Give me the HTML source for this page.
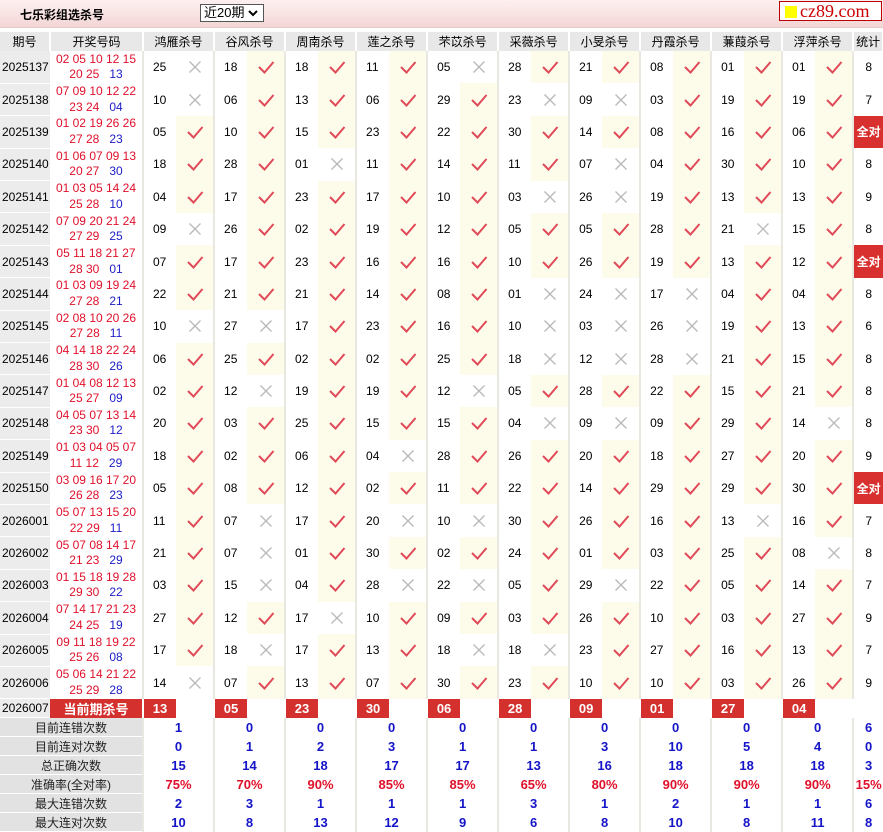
<!DOCTYPE html>
<html><head><meta charset="utf-8"><style>
*{margin:0;padding:0;box-sizing:border-box}
body{width:883px;height:832px;overflow:hidden;background:#fff;font-family:"Liberation Sans","Noto Sans CJK SC",sans-serif;font-size:12px;color:#000;position:relative}
.top{position:absolute;left:0;top:0;width:883px;height:28px;background:linear-gradient(#fdf0f0,#f4d6d6);border-bottom:1px solid #e8c8c8}
.title{position:absolute;left:20px;top:6px;font-weight:bold;font-size:12px}
.sel{position:absolute;left:200px;top:4px;width:64px;height:18px;border:1px solid #555;background:#fff;font-size:13px;line-height:16px;padding-left:3px}
.sel svg{position:absolute;right:5px;top:5px}
.logo{position:absolute;left:779px;top:1px;width:103px;height:20px;border:1px solid #b00;background:#fff;color:#c00;font-family:"Liberation Serif",serif;font-size:18px;line-height:18px;padding-left:20px}
.logo i{position:absolute;left:5px;top:4px;width:12px;height:12px;background:#ff0}
table{position:absolute;left:0;top:32px;border-collapse:collapse;table-layout:fixed;width:883px}
td{padding:0;text-align:center;vertical-align:middle;white-space:nowrap}
tr.h td{height:19px;background:#e8e8e8;font-size:12px;border-right:2px solid #fff}
tr.d td{height:32.4px}
td.p{background:#ececec;text-align:left;padding-left:2px;border-bottom:1px solid #fff}
td.k{line-height:15.5px;color:#e0102a;font-size:12px}
td.k b{color:#1c1cc8;font-weight:normal}
td.n{text-align:left;padding-left:9px;border-left:2px solid #e9e8e0}
td.c{background:#fdfcea}
td.t{border-left:2px solid #e9e8e0}
td.f{background:#d8302e;color:#fff;font-weight:bold}
td svg{display:block;margin:0 auto}
tr.cur td{height:18px}
tr.cur td.r{background:#d3302e;color:#fff;font-weight:bold;font-size:13px}
tr.s td{height:19px;font-weight:bold;font-size:13px;color:#1414c8;border-left:2px solid #e9e8e0}
tr.s td.l{background:#e2e2e2;color:#222;font-weight:normal;font-size:12px;border-bottom:1px solid #fff;border-left:none}
tr.s td.pc{color:#e0102a}
</style></head><body>
<svg width="0" height="0" style="position:absolute"><defs>
<symbol id="v" viewBox="0 0 18 16"><path d="M2 8 L7.5 13.5 L16.5 3" fill="none" stroke="#e04a58" stroke-width="2"/></symbol>
<symbol id="x" viewBox="0 0 18 16"><path d="M3.5 2.5 L14.5 13.5 M14.5 2.5 L3.5 13.5" fill="none" stroke="#b8b8b8" stroke-width="1.3"/></symbol>
</defs></svg>
<div class="top"><div class="title">七乐彩组选杀号</div><div class="sel">近20期<svg width="10" height="7" viewBox="0 0 10 7"><path d="M1 1 L5 5 L9 1" fill="none" stroke="#000" stroke-width="2"/></svg></div><div class="logo"><i></i>cz89.com</div></div>
<table>
<colgroup><col style="width:50px"><col style="width:93px">
<col style="width:33px"><col style="width:38px"><col style="width:33px"><col style="width:38px"><col style="width:33px"><col style="width:38px"><col style="width:33px"><col style="width:38px"><col style="width:33px"><col style="width:38px"><col style="width:33px"><col style="width:38px"><col style="width:33px"><col style="width:38px"><col style="width:33px"><col style="width:38px"><col style="width:33px"><col style="width:38px"><col style="width:33px"><col style="width:38px">
<col style="width:30px"></colgroup>
<tr class="h"><td>期号</td><td>开奖号码</td><td colspan="2">鸿雁杀号</td><td colspan="2">谷风杀号</td><td colspan="2">周南杀号</td><td colspan="2">莲之杀号</td><td colspan="2">芣苡杀号</td><td colspan="2">采薇杀号</td><td colspan="2">小旻杀号</td><td colspan="2">丹霞杀号</td><td colspan="2">蒹葭杀号</td><td colspan="2">浮萍杀号</td><td>统计</td></tr>

<tr class="d"><td class="p">2025137</td><td class="k">02 05 10 12 15<br>20 25 &nbsp;&nbsp;<b>13</b></td>
<td class="n">25</td><td><svg width="18" height="16"><use href="#x"/></svg></td>
<td class="n">18</td><td class="c"><svg width="18" height="16"><use href="#v"/></svg></td>
<td class="n">18</td><td class="c"><svg width="18" height="16"><use href="#v"/></svg></td>
<td class="n">11</td><td class="c"><svg width="18" height="16"><use href="#v"/></svg></td>
<td class="n">05</td><td><svg width="18" height="16"><use href="#x"/></svg></td>
<td class="n">28</td><td class="c"><svg width="18" height="16"><use href="#v"/></svg></td>
<td class="n">21</td><td class="c"><svg width="18" height="16"><use href="#v"/></svg></td>
<td class="n">08</td><td class="c"><svg width="18" height="16"><use href="#v"/></svg></td>
<td class="n">01</td><td class="c"><svg width="18" height="16"><use href="#v"/></svg></td>
<td class="n">01</td><td class="c"><svg width="18" height="16"><use href="#v"/></svg></td>
<td class="t">8</td></tr>

<tr class="d"><td class="p">2025138</td><td class="k">07 09 10 12 22<br>23 24 &nbsp;&nbsp;<b>04</b></td>
<td class="n">10</td><td><svg width="18" height="16"><use href="#x"/></svg></td>
<td class="n">06</td><td class="c"><svg width="18" height="16"><use href="#v"/></svg></td>
<td class="n">13</td><td class="c"><svg width="18" height="16"><use href="#v"/></svg></td>
<td class="n">06</td><td class="c"><svg width="18" height="16"><use href="#v"/></svg></td>
<td class="n">29</td><td class="c"><svg width="18" height="16"><use href="#v"/></svg></td>
<td class="n">23</td><td><svg width="18" height="16"><use href="#x"/></svg></td>
<td class="n">09</td><td><svg width="18" height="16"><use href="#x"/></svg></td>
<td class="n">03</td><td class="c"><svg width="18" height="16"><use href="#v"/></svg></td>
<td class="n">19</td><td class="c"><svg width="18" height="16"><use href="#v"/></svg></td>
<td class="n">19</td><td class="c"><svg width="18" height="16"><use href="#v"/></svg></td>
<td class="t">7</td></tr>

<tr class="d"><td class="p">2025139</td><td class="k">01 02 19 26 26<br>27 28 &nbsp;&nbsp;<b>23</b></td>
<td class="n">05</td><td class="c"><svg width="18" height="16"><use href="#v"/></svg></td>
<td class="n">10</td><td class="c"><svg width="18" height="16"><use href="#v"/></svg></td>
<td class="n">15</td><td class="c"><svg width="18" height="16"><use href="#v"/></svg></td>
<td class="n">23</td><td class="c"><svg width="18" height="16"><use href="#v"/></svg></td>
<td class="n">22</td><td class="c"><svg width="18" height="16"><use href="#v"/></svg></td>
<td class="n">30</td><td class="c"><svg width="18" height="16"><use href="#v"/></svg></td>
<td class="n">14</td><td class="c"><svg width="18" height="16"><use href="#v"/></svg></td>
<td class="n">08</td><td class="c"><svg width="18" height="16"><use href="#v"/></svg></td>
<td class="n">16</td><td class="c"><svg width="18" height="16"><use href="#v"/></svg></td>
<td class="n">06</td><td class="c"><svg width="18" height="16"><use href="#v"/></svg></td>
<td class="t f">全对</td></tr>

<tr class="d"><td class="p">2025140</td><td class="k">01 06 07 09 13<br>20 27 &nbsp;&nbsp;<b>30</b></td>
<td class="n">18</td><td class="c"><svg width="18" height="16"><use href="#v"/></svg></td>
<td class="n">28</td><td class="c"><svg width="18" height="16"><use href="#v"/></svg></td>
<td class="n">01</td><td><svg width="18" height="16"><use href="#x"/></svg></td>
<td class="n">11</td><td class="c"><svg width="18" height="16"><use href="#v"/></svg></td>
<td class="n">14</td><td class="c"><svg width="18" height="16"><use href="#v"/></svg></td>
<td class="n">11</td><td class="c"><svg width="18" height="16"><use href="#v"/></svg></td>
<td class="n">07</td><td><svg width="18" height="16"><use href="#x"/></svg></td>
<td class="n">04</td><td class="c"><svg width="18" height="16"><use href="#v"/></svg></td>
<td class="n">30</td><td class="c"><svg width="18" height="16"><use href="#v"/></svg></td>
<td class="n">10</td><td class="c"><svg width="18" height="16"><use href="#v"/></svg></td>
<td class="t">8</td></tr>

<tr class="d"><td class="p">2025141</td><td class="k">01 03 05 14 24<br>25 28 &nbsp;&nbsp;<b>10</b></td>
<td class="n">04</td><td class="c"><svg width="18" height="16"><use href="#v"/></svg></td>
<td class="n">17</td><td class="c"><svg width="18" height="16"><use href="#v"/></svg></td>
<td class="n">23</td><td class="c"><svg width="18" height="16"><use href="#v"/></svg></td>
<td class="n">17</td><td class="c"><svg width="18" height="16"><use href="#v"/></svg></td>
<td class="n">10</td><td class="c"><svg width="18" height="16"><use href="#v"/></svg></td>
<td class="n">03</td><td><svg width="18" height="16"><use href="#x"/></svg></td>
<td class="n">26</td><td><svg width="18" height="16"><use href="#x"/></svg></td>
<td class="n">19</td><td class="c"><svg width="18" height="16"><use href="#v"/></svg></td>
<td class="n">13</td><td class="c"><svg width="18" height="16"><use href="#v"/></svg></td>
<td class="n">13</td><td class="c"><svg width="18" height="16"><use href="#v"/></svg></td>
<td class="t">9</td></tr>

<tr class="d"><td class="p">2025142</td><td class="k">07 09 20 21 24<br>27 29 &nbsp;&nbsp;<b>25</b></td>
<td class="n">09</td><td><svg width="18" height="16"><use href="#x"/></svg></td>
<td class="n">26</td><td class="c"><svg width="18" height="16"><use href="#v"/></svg></td>
<td class="n">02</td><td class="c"><svg width="18" height="16"><use href="#v"/></svg></td>
<td class="n">19</td><td class="c"><svg width="18" height="16"><use href="#v"/></svg></td>
<td class="n">12</td><td class="c"><svg width="18" height="16"><use href="#v"/></svg></td>
<td class="n">05</td><td class="c"><svg width="18" height="16"><use href="#v"/></svg></td>
<td class="n">05</td><td class="c"><svg width="18" height="16"><use href="#v"/></svg></td>
<td class="n">28</td><td class="c"><svg width="18" height="16"><use href="#v"/></svg></td>
<td class="n">21</td><td><svg width="18" height="16"><use href="#x"/></svg></td>
<td class="n">15</td><td class="c"><svg width="18" height="16"><use href="#v"/></svg></td>
<td class="t">8</td></tr>

<tr class="d"><td class="p">2025143</td><td class="k">05 11 18 21 27<br>28 30 &nbsp;&nbsp;<b>01</b></td>
<td class="n">07</td><td class="c"><svg width="18" height="16"><use href="#v"/></svg></td>
<td class="n">17</td><td class="c"><svg width="18" height="16"><use href="#v"/></svg></td>
<td class="n">23</td><td class="c"><svg width="18" height="16"><use href="#v"/></svg></td>
<td class="n">16</td><td class="c"><svg width="18" height="16"><use href="#v"/></svg></td>
<td class="n">16</td><td class="c"><svg width="18" height="16"><use href="#v"/></svg></td>
<td class="n">10</td><td class="c"><svg width="18" height="16"><use href="#v"/></svg></td>
<td class="n">26</td><td class="c"><svg width="18" height="16"><use href="#v"/></svg></td>
<td class="n">19</td><td class="c"><svg width="18" height="16"><use href="#v"/></svg></td>
<td class="n">13</td><td class="c"><svg width="18" height="16"><use href="#v"/></svg></td>
<td class="n">12</td><td class="c"><svg width="18" height="16"><use href="#v"/></svg></td>
<td class="t f">全对</td></tr>

<tr class="d"><td class="p">2025144</td><td class="k">01 03 09 19 24<br>27 28 &nbsp;&nbsp;<b>21</b></td>
<td class="n">22</td><td class="c"><svg width="18" height="16"><use href="#v"/></svg></td>
<td class="n">21</td><td class="c"><svg width="18" height="16"><use href="#v"/></svg></td>
<td class="n">21</td><td class="c"><svg width="18" height="16"><use href="#v"/></svg></td>
<td class="n">14</td><td class="c"><svg width="18" height="16"><use href="#v"/></svg></td>
<td class="n">08</td><td class="c"><svg width="18" height="16"><use href="#v"/></svg></td>
<td class="n">01</td><td><svg width="18" height="16"><use href="#x"/></svg></td>
<td class="n">24</td><td><svg width="18" height="16"><use href="#x"/></svg></td>
<td class="n">17</td><td><svg width="18" height="16"><use href="#x"/></svg></td>
<td class="n">04</td><td class="c"><svg width="18" height="16"><use href="#v"/></svg></td>
<td class="n">04</td><td class="c"><svg width="18" height="16"><use href="#v"/></svg></td>
<td class="t">8</td></tr>

<tr class="d"><td class="p">2025145</td><td class="k">02 08 10 20 26<br>27 28 &nbsp;&nbsp;<b>11</b></td>
<td class="n">10</td><td><svg width="18" height="16"><use href="#x"/></svg></td>
<td class="n">27</td><td><svg width="18" height="16"><use href="#x"/></svg></td>
<td class="n">17</td><td class="c"><svg width="18" height="16"><use href="#v"/></svg></td>
<td class="n">23</td><td class="c"><svg width="18" height="16"><use href="#v"/></svg></td>
<td class="n">16</td><td class="c"><svg width="18" height="16"><use href="#v"/></svg></td>
<td class="n">10</td><td><svg width="18" height="16"><use href="#x"/></svg></td>
<td class="n">03</td><td><svg width="18" height="16"><use href="#x"/></svg></td>
<td class="n">26</td><td><svg width="18" height="16"><use href="#x"/></svg></td>
<td class="n">19</td><td class="c"><svg width="18" height="16"><use href="#v"/></svg></td>
<td class="n">13</td><td class="c"><svg width="18" height="16"><use href="#v"/></svg></td>
<td class="t">6</td></tr>

<tr class="d"><td class="p">2025146</td><td class="k">04 14 18 22 24<br>28 30 &nbsp;&nbsp;<b>26</b></td>
<td class="n">06</td><td class="c"><svg width="18" height="16"><use href="#v"/></svg></td>
<td class="n">25</td><td class="c"><svg width="18" height="16"><use href="#v"/></svg></td>
<td class="n">02</td><td class="c"><svg width="18" height="16"><use href="#v"/></svg></td>
<td class="n">02</td><td class="c"><svg width="18" height="16"><use href="#v"/></svg></td>
<td class="n">25</td><td class="c"><svg width="18" height="16"><use href="#v"/></svg></td>
<td class="n">18</td><td><svg width="18" height="16"><use href="#x"/></svg></td>
<td class="n">12</td><td><svg width="18" height="16"><use href="#x"/></svg></td>
<td class="n">28</td><td><svg width="18" height="16"><use href="#x"/></svg></td>
<td class="n">21</td><td class="c"><svg width="18" height="16"><use href="#v"/></svg></td>
<td class="n">15</td><td class="c"><svg width="18" height="16"><use href="#v"/></svg></td>
<td class="t">8</td></tr>

<tr class="d"><td class="p">2025147</td><td class="k">01 04 08 12 13<br>25 27 &nbsp;&nbsp;<b>09</b></td>
<td class="n">02</td><td class="c"><svg width="18" height="16"><use href="#v"/></svg></td>
<td class="n">12</td><td><svg width="18" height="16"><use href="#x"/></svg></td>
<td class="n">19</td><td class="c"><svg width="18" height="16"><use href="#v"/></svg></td>
<td class="n">19</td><td class="c"><svg width="18" height="16"><use href="#v"/></svg></td>
<td class="n">12</td><td><svg width="18" height="16"><use href="#x"/></svg></td>
<td class="n">05</td><td class="c"><svg width="18" height="16"><use href="#v"/></svg></td>
<td class="n">28</td><td class="c"><svg width="18" height="16"><use href="#v"/></svg></td>
<td class="n">22</td><td class="c"><svg width="18" height="16"><use href="#v"/></svg></td>
<td class="n">15</td><td class="c"><svg width="18" height="16"><use href="#v"/></svg></td>
<td class="n">21</td><td class="c"><svg width="18" height="16"><use href="#v"/></svg></td>
<td class="t">8</td></tr>

<tr class="d"><td class="p">2025148</td><td class="k">04 05 07 13 14<br>23 30 &nbsp;&nbsp;<b>12</b></td>
<td class="n">20</td><td class="c"><svg width="18" height="16"><use href="#v"/></svg></td>
<td class="n">03</td><td class="c"><svg width="18" height="16"><use href="#v"/></svg></td>
<td class="n">25</td><td class="c"><svg width="18" height="16"><use href="#v"/></svg></td>
<td class="n">15</td><td class="c"><svg width="18" height="16"><use href="#v"/></svg></td>
<td class="n">15</td><td class="c"><svg width="18" height="16"><use href="#v"/></svg></td>
<td class="n">04</td><td><svg width="18" height="16"><use href="#x"/></svg></td>
<td class="n">09</td><td><svg width="18" height="16"><use href="#x"/></svg></td>
<td class="n">09</td><td class="c"><svg width="18" height="16"><use href="#v"/></svg></td>
<td class="n">29</td><td class="c"><svg width="18" height="16"><use href="#v"/></svg></td>
<td class="n">14</td><td><svg width="18" height="16"><use href="#x"/></svg></td>
<td class="t">8</td></tr>

<tr class="d"><td class="p">2025149</td><td class="k">01 03 04 05 07<br>11 12 &nbsp;&nbsp;<b>29</b></td>
<td class="n">18</td><td class="c"><svg width="18" height="16"><use href="#v"/></svg></td>
<td class="n">02</td><td class="c"><svg width="18" height="16"><use href="#v"/></svg></td>
<td class="n">06</td><td class="c"><svg width="18" height="16"><use href="#v"/></svg></td>
<td class="n">04</td><td><svg width="18" height="16"><use href="#x"/></svg></td>
<td class="n">28</td><td class="c"><svg width="18" height="16"><use href="#v"/></svg></td>
<td class="n">26</td><td class="c"><svg width="18" height="16"><use href="#v"/></svg></td>
<td class="n">20</td><td class="c"><svg width="18" height="16"><use href="#v"/></svg></td>
<td class="n">18</td><td class="c"><svg width="18" height="16"><use href="#v"/></svg></td>
<td class="n">27</td><td class="c"><svg width="18" height="16"><use href="#v"/></svg></td>
<td class="n">20</td><td class="c"><svg width="18" height="16"><use href="#v"/></svg></td>
<td class="t">9</td></tr>

<tr class="d"><td class="p">2025150</td><td class="k">03 09 16 17 20<br>26 28 &nbsp;&nbsp;<b>23</b></td>
<td class="n">05</td><td class="c"><svg width="18" height="16"><use href="#v"/></svg></td>
<td class="n">08</td><td class="c"><svg width="18" height="16"><use href="#v"/></svg></td>
<td class="n">12</td><td class="c"><svg width="18" height="16"><use href="#v"/></svg></td>
<td class="n">02</td><td class="c"><svg width="18" height="16"><use href="#v"/></svg></td>
<td class="n">11</td><td class="c"><svg width="18" height="16"><use href="#v"/></svg></td>
<td class="n">22</td><td class="c"><svg width="18" height="16"><use href="#v"/></svg></td>
<td class="n">14</td><td class="c"><svg width="18" height="16"><use href="#v"/></svg></td>
<td class="n">29</td><td class="c"><svg width="18" height="16"><use href="#v"/></svg></td>
<td class="n">29</td><td class="c"><svg width="18" height="16"><use href="#v"/></svg></td>
<td class="n">30</td><td class="c"><svg width="18" height="16"><use href="#v"/></svg></td>
<td class="t f">全对</td></tr>

<tr class="d"><td class="p">2026001</td><td class="k">05 07 13 15 20<br>22 29 &nbsp;&nbsp;<b>11</b></td>
<td class="n">11</td><td class="c"><svg width="18" height="16"><use href="#v"/></svg></td>
<td class="n">07</td><td><svg width="18" height="16"><use href="#x"/></svg></td>
<td class="n">17</td><td class="c"><svg width="18" height="16"><use href="#v"/></svg></td>
<td class="n">20</td><td><svg width="18" height="16"><use href="#x"/></svg></td>
<td class="n">10</td><td><svg width="18" height="16"><use href="#x"/></svg></td>
<td class="n">30</td><td class="c"><svg width="18" height="16"><use href="#v"/></svg></td>
<td class="n">26</td><td class="c"><svg width="18" height="16"><use href="#v"/></svg></td>
<td class="n">16</td><td class="c"><svg width="18" height="16"><use href="#v"/></svg></td>
<td class="n">13</td><td><svg width="18" height="16"><use href="#x"/></svg></td>
<td class="n">16</td><td class="c"><svg width="18" height="16"><use href="#v"/></svg></td>
<td class="t">7</td></tr>

<tr class="d"><td class="p">2026002</td><td class="k">05 07 08 14 17<br>21 23 &nbsp;&nbsp;<b>29</b></td>
<td class="n">21</td><td class="c"><svg width="18" height="16"><use href="#v"/></svg></td>
<td class="n">07</td><td><svg width="18" height="16"><use href="#x"/></svg></td>
<td class="n">01</td><td class="c"><svg width="18" height="16"><use href="#v"/></svg></td>
<td class="n">30</td><td class="c"><svg width="18" height="16"><use href="#v"/></svg></td>
<td class="n">02</td><td class="c"><svg width="18" height="16"><use href="#v"/></svg></td>
<td class="n">24</td><td class="c"><svg width="18" height="16"><use href="#v"/></svg></td>
<td class="n">01</td><td class="c"><svg width="18" height="16"><use href="#v"/></svg></td>
<td class="n">03</td><td class="c"><svg width="18" height="16"><use href="#v"/></svg></td>
<td class="n">25</td><td class="c"><svg width="18" height="16"><use href="#v"/></svg></td>
<td class="n">08</td><td><svg width="18" height="16"><use href="#x"/></svg></td>
<td class="t">8</td></tr>

<tr class="d"><td class="p">2026003</td><td class="k">01 15 18 19 28<br>29 30 &nbsp;&nbsp;<b>22</b></td>
<td class="n">03</td><td class="c"><svg width="18" height="16"><use href="#v"/></svg></td>
<td class="n">15</td><td><svg width="18" height="16"><use href="#x"/></svg></td>
<td class="n">04</td><td class="c"><svg width="18" height="16"><use href="#v"/></svg></td>
<td class="n">28</td><td><svg width="18" height="16"><use href="#x"/></svg></td>
<td class="n">22</td><td><svg width="18" height="16"><use href="#x"/></svg></td>
<td class="n">05</td><td class="c"><svg width="18" height="16"><use href="#v"/></svg></td>
<td class="n">29</td><td><svg width="18" height="16"><use href="#x"/></svg></td>
<td class="n">22</td><td class="c"><svg width="18" height="16"><use href="#v"/></svg></td>
<td class="n">05</td><td class="c"><svg width="18" height="16"><use href="#v"/></svg></td>
<td class="n">14</td><td class="c"><svg width="18" height="16"><use href="#v"/></svg></td>
<td class="t">7</td></tr>

<tr class="d"><td class="p">2026004</td><td class="k">07 14 17 21 23<br>24 25 &nbsp;&nbsp;<b>19</b></td>
<td class="n">27</td><td class="c"><svg width="18" height="16"><use href="#v"/></svg></td>
<td class="n">12</td><td class="c"><svg width="18" height="16"><use href="#v"/></svg></td>
<td class="n">17</td><td><svg width="18" height="16"><use href="#x"/></svg></td>
<td class="n">10</td><td class="c"><svg width="18" height="16"><use href="#v"/></svg></td>
<td class="n">09</td><td class="c"><svg width="18" height="16"><use href="#v"/></svg></td>
<td class="n">03</td><td class="c"><svg width="18" height="16"><use href="#v"/></svg></td>
<td class="n">26</td><td class="c"><svg width="18" height="16"><use href="#v"/></svg></td>
<td class="n">10</td><td class="c"><svg width="18" height="16"><use href="#v"/></svg></td>
<td class="n">03</td><td class="c"><svg width="18" height="16"><use href="#v"/></svg></td>
<td class="n">27</td><td class="c"><svg width="18" height="16"><use href="#v"/></svg></td>
<td class="t">9</td></tr>

<tr class="d"><td class="p">2026005</td><td class="k">09 11 18 19 22<br>25 26 &nbsp;&nbsp;<b>08</b></td>
<td class="n">17</td><td class="c"><svg width="18" height="16"><use href="#v"/></svg></td>
<td class="n">18</td><td><svg width="18" height="16"><use href="#x"/></svg></td>
<td class="n">17</td><td class="c"><svg width="18" height="16"><use href="#v"/></svg></td>
<td class="n">13</td><td class="c"><svg width="18" height="16"><use href="#v"/></svg></td>
<td class="n">18</td><td><svg width="18" height="16"><use href="#x"/></svg></td>
<td class="n">18</td><td><svg width="18" height="16"><use href="#x"/></svg></td>
<td class="n">23</td><td class="c"><svg width="18" height="16"><use href="#v"/></svg></td>
<td class="n">27</td><td class="c"><svg width="18" height="16"><use href="#v"/></svg></td>
<td class="n">16</td><td class="c"><svg width="18" height="16"><use href="#v"/></svg></td>
<td class="n">13</td><td class="c"><svg width="18" height="16"><use href="#v"/></svg></td>
<td class="t">7</td></tr>

<tr class="d"><td class="p">2026006</td><td class="k">05 06 14 21 22<br>25 29 &nbsp;&nbsp;<b>28</b></td>
<td class="n">14</td><td><svg width="18" height="16"><use href="#x"/></svg></td>
<td class="n">07</td><td class="c"><svg width="18" height="16"><use href="#v"/></svg></td>
<td class="n">13</td><td class="c"><svg width="18" height="16"><use href="#v"/></svg></td>
<td class="n">07</td><td class="c"><svg width="18" height="16"><use href="#v"/></svg></td>
<td class="n">30</td><td class="c"><svg width="18" height="16"><use href="#v"/></svg></td>
<td class="n">23</td><td class="c"><svg width="18" height="16"><use href="#v"/></svg></td>
<td class="n">10</td><td class="c"><svg width="18" height="16"><use href="#v"/></svg></td>
<td class="n">10</td><td class="c"><svg width="18" height="16"><use href="#v"/></svg></td>
<td class="n">03</td><td class="c"><svg width="18" height="16"><use href="#v"/></svg></td>
<td class="n">26</td><td class="c"><svg width="18" height="16"><use href="#v"/></svg></td>
<td class="t">9</td></tr>

<tr class="cur"><td class="p">2026007</td><td class="r">当前期杀号</td>
<td class="r" style="border-left:2px solid #fff">13</td><td></td>
<td class="r" style="border-left:2px solid #fff">05</td><td></td>
<td class="r" style="border-left:2px solid #fff">23</td><td></td>
<td class="r" style="border-left:2px solid #fff">30</td><td></td>
<td class="r" style="border-left:2px solid #fff">06</td><td></td>
<td class="r" style="border-left:2px solid #fff">28</td><td></td>
<td class="r" style="border-left:2px solid #fff">09</td><td></td>
<td class="r" style="border-left:2px solid #fff">01</td><td></td>
<td class="r" style="border-left:2px solid #fff">27</td><td></td>
<td class="r" style="border-left:2px solid #fff">04</td><td></td>
<td></td></tr>

<tr class="s"><td class="l" colspan="2">目前连错次数</td><td colspan="2">1</td><td colspan="2">0</td><td colspan="2">0</td><td colspan="2">0</td><td colspan="2">0</td><td colspan="2">0</td><td colspan="2">0</td><td colspan="2">0</td><td colspan="2">0</td><td colspan="2">0</td><td>6</td></tr>
<tr class="s"><td class="l" colspan="2">目前连对次数</td><td colspan="2">0</td><td colspan="2">1</td><td colspan="2">2</td><td colspan="2">3</td><td colspan="2">1</td><td colspan="2">1</td><td colspan="2">3</td><td colspan="2">10</td><td colspan="2">5</td><td colspan="2">4</td><td>0</td></tr>
<tr class="s"><td class="l" colspan="2">总正确次数</td><td colspan="2">15</td><td colspan="2">14</td><td colspan="2">18</td><td colspan="2">17</td><td colspan="2">17</td><td colspan="2">13</td><td colspan="2">16</td><td colspan="2">18</td><td colspan="2">18</td><td colspan="2">18</td><td>3</td></tr>
<tr class="s"><td class="l" colspan="2">准确率(全对率)</td><td class="pc" colspan="2">75%</td><td class="pc" colspan="2">70%</td><td class="pc" colspan="2">90%</td><td class="pc" colspan="2">85%</td><td class="pc" colspan="2">85%</td><td class="pc" colspan="2">65%</td><td class="pc" colspan="2">80%</td><td class="pc" colspan="2">90%</td><td class="pc" colspan="2">90%</td><td class="pc" colspan="2">90%</td><td class="pc">15%</td></tr>
<tr class="s"><td class="l" colspan="2">最大连错次数</td><td colspan="2">2</td><td colspan="2">3</td><td colspan="2">1</td><td colspan="2">1</td><td colspan="2">1</td><td colspan="2">3</td><td colspan="2">1</td><td colspan="2">2</td><td colspan="2">1</td><td colspan="2">1</td><td>6</td></tr>
<tr class="s"><td class="l" colspan="2">最大连对次数</td><td colspan="2">10</td><td colspan="2">8</td><td colspan="2">13</td><td colspan="2">12</td><td colspan="2">9</td><td colspan="2">6</td><td colspan="2">8</td><td colspan="2">10</td><td colspan="2">8</td><td colspan="2">11</td><td>8</td></tr>
</table>
</body></html>
